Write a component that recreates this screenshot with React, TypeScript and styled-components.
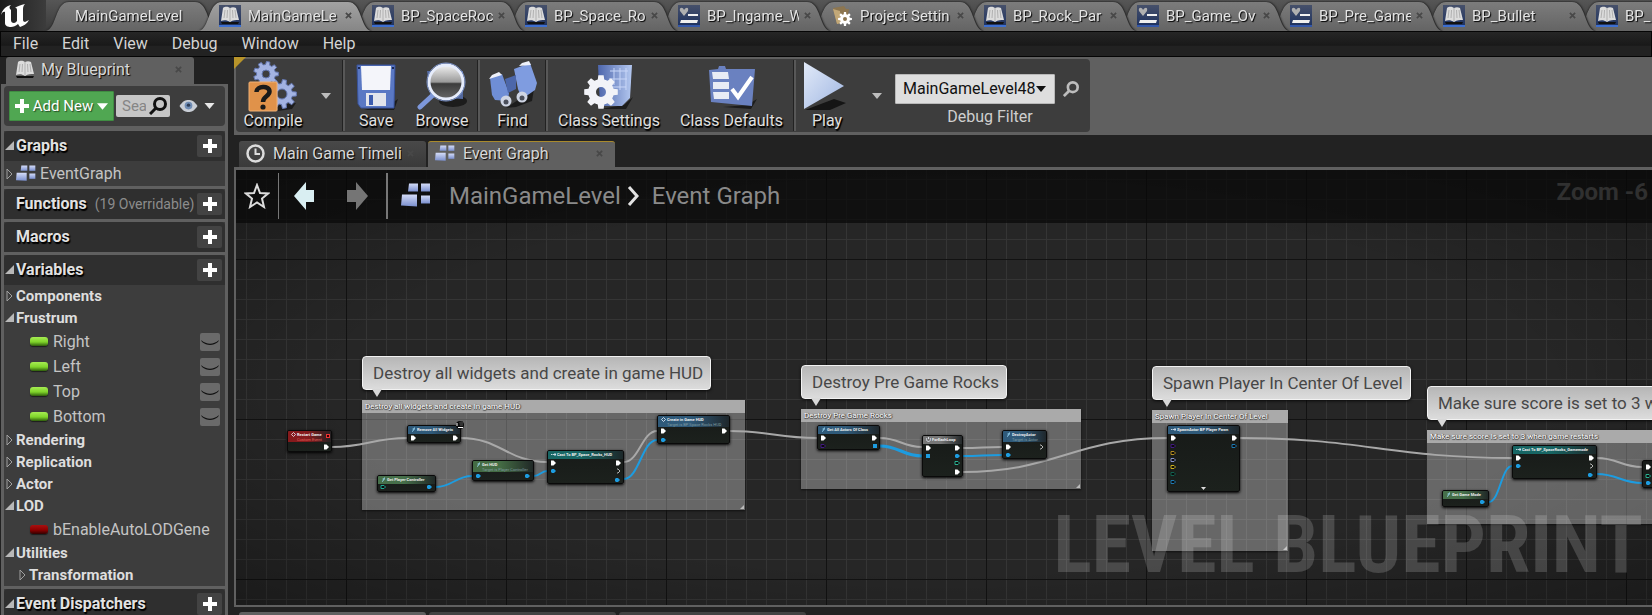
import React from "react";
import styled, { createGlobalStyle, css } from "styled-components";

const Global = createGlobalStyle`
  *, *::before, *::after { box-sizing: border-box; }
  body { margin: 0; background: #222; }
  button, input, select { font: inherit; color: inherit; }
  button { border: 0; padding: 0; background: none; cursor: pointer; }
  ul { list-style: none; margin: 0; padding: 0; }
  svg { display: block; flex: none; }
`;

const Shell = styled.div`
  display: flex;
  flex-direction: column;
  height: 100vh;
  overflow: hidden;
  background: #222;
  color: #d8d8d8;
  font: 16px/20px Roboto, "Liberation Sans", sans-serif;
`;

/* ---------- window tabs ---------- */

const TabBar = styled.header`
  display: flex;
  height: 31px;
  flex: none;
  overflow: hidden;
  padding-top: 2px;
  background: linear-gradient(#565656, #3a3a3a);
`;

const LogoBox = styled.div`
  flex: 0 0 46px;
  margin-top: -2px;
  background: linear-gradient(90deg, #1c1c1c, #303030 60%, #3c3c3c);
`;

const TabWrap = styled.div<{ $z: number }>`
  position: relative;
  z-index: ${(p) => p.$z};
  flex: 0 0 172px;
  margin-right: -19px;
  filter: drop-shadow(0 0 1px #1c1c1c) drop-shadow(1px 0 0 #3a3a3a);
`;

const TabBody = styled.div<{ $active?: boolean; $plain?: boolean }>`
  display: flex;
  align-items: center;
  height: 29px;
  padding: 0 0 2px ${(p) => (p.$plain ? 29 : 20)}px;
  font-size: 15px;
  color: #e4e4e4;
  text-shadow: 1px 1px 1px #000;
  background: ${(p) => (p.$active ? "linear-gradient(#a2a2a2, #868686)" : "linear-gradient(#7c7c7c, #646464)")};
  clip-path: path("M0 29 C11 26 9 0 23 0 H149 C163 0 161 26 172 29 Z");
`;

const TabLabel = styled.button<{ $wide?: boolean }>`
  width: ${(p) => (p.$wide ? 120 : 92)}px;
  margin-left: ${(p) => (p.$wide ? 0 : 7)}px;
  overflow: hidden;
  white-space: nowrap;
  text-align: left;
  text-shadow: inherit;
`;

const CloseButton = styled.button<{ $push?: boolean }>`
  display: flex;
  align-items: center;
  justify-content: center;
  width: 12px;
  height: 12px;
  margin-left: ${(p) => (p.$push ? "auto" : "2px")};
  color: #484848;
`;

/* ---------- menu ---------- */

const MenuBar = styled.nav`
  display: flex;
  align-items: center;
  flex: none;
  height: 26px;
  border: 1px solid #050505;
  background: linear-gradient(#262626, #191919 55%, #222 60%);
`;

const MenuItem = styled.button`
  padding: 0 12px;
  color: #d4d4d4;
`;

const Workspace = styled.div`
  display: flex;
  flex: 1;
  min-height: 0;
`;

/* ---------- left panel ---------- */

const Side = styled.aside`
  display: flex;
  flex-direction: column;
  flex: 0 0 228px;
  padding-left: 1px;
`;

const SideTab = styled.div`
  display: flex;
  align-items: center;
  flex: none;
  width: 188px;
  height: 27px;
  margin-left: 5px;
  padding: 0 10px 2px 8px;
  gap: 5px;
  text-shadow: 1px 1px 1px #000;
  background: #606060;
  border-radius: 3px 3px 0 0;
`;

const SidePanel = styled.div`
  flex: 1;
  min-height: 0;
  overflow: hidden;
  padding: 2px 3px 0;
  background: #606060;
`;

const SideTools = styled.div`
  display: flex;
  align-items: center;
  height: 40px;
  padding: 0 5px;
  margin-bottom: 5px;
  background: #3d3d3d;
  border-radius: 4px;
`;

const AddButton = styled.button`
  display: flex;
  align-items: center;
  justify-content: center;
  gap: 4px;
  width: 105px;
  height: 30px;
  margin-right: 2px;
  background: #50a752;
  border: 1px solid #3f8d42;
  border-radius: 1px;
  font-size: 15px;
  color: #fff;
  text-shadow: 1px 1px 1px #234d24;
`;

const SearchBox = styled.label`
  display: flex;
  align-items: center;
  width: 54px;
  height: 22px;
  margin-right: 8px;
  padding-left: 6px;
  background: #c6c6c6;
  border-radius: 2px;
  color: #111;
`;

const SearchInput = styled.input`
  width: 24px;
  border: 0;
  padding: 0;
  margin-right: 3px;
  font-size: 15px;
  background: transparent;
  outline: 0;
  &::placeholder { color: #858585; opacity: 1; }
`;

const EyeButton = styled.button`
  display: flex;
  align-items: center;
  gap: 5px;
  color: #e8e8e8;
`;

const Section = styled.section`
  margin-bottom: 3px;
  background: #3d3d3d;
`;

const SectionHead = styled.div`
  display: flex;
  align-items: center;
  height: 30px;
  padding-right: 3px;
  background: #2f2f2f;
  border-radius: 4px 4px 0 0;
`;

const Expander = styled.button`
  width: 12px;
  height: 14px;
  flex: none;
`;

const SectionTitle = styled.h2`
  margin: 0;
  font-size: 16px;
  font-weight: 700;
  white-space: nowrap;
  color: #e2e2e2;
  text-shadow: 1px 1px 1px #000, 1px 2px 1px #000;
`;

const Note = styled.span`
  margin-left: 8px;
  font-size: 14px;
  white-space: nowrap;
  color: #8c8c8c;
`;

const PlusButton = styled.button`
  display: flex;
  align-items: center;
  justify-content: center;
  width: 25px;
  height: 22px;
  margin-left: auto;
  background: #434343;
  border-radius: 2px;
  color: #fff;
`;

const Row = styled.li<{ $kind: "graph" | "cat" | "subcat" | "var" }>`
  display: flex;
  align-items: center;
  height: ${(p) => (p.$kind === "var" || p.$kind === "graph" ? 25 : 22)}px;
  padding: 0 5px 0 0;
  white-space: nowrap;
  ${(p) => p.$kind === "var" && css`padding-left: 26px; gap: 5px;`}
  ${(p) => p.$kind === "subcat" && css`padding-left: 13px;`}
  ${(p) => (p.$kind === "cat" || p.$kind === "subcat") && css`font-weight: 700; font-size: 15px;`}
  color: ${(p) => (p.$kind === "cat" || p.$kind === "subcat" ? "#dedede" : "#c4c4c4")};
`;

const GraphRowLabel = styled.span`
  margin-left: 4px;
`;

const Pill = styled.i<{ $red?: boolean }>`
  width: 18px;
  height: 9px;
  border-radius: 3px;
  background: ${(p) => (p.$red ? "linear-gradient(#a81010, #8c0000 55%, #300)" : "linear-gradient(#a6ec52, #7fd42a 55%, #2e5c0c)")};
  box-shadow: 0 1px 1px #1c1c1c;
`;

const EyeToggle = styled.button`
  width: 20px;
  height: 18px;
  margin-left: auto;
  border-radius: 2px;
  background: #6a6a6a;
`;

/* ---------- main area ---------- */

const Main = styled.main`
  display: flex;
  flex-direction: column;
  flex: 1;
  min-width: 0;
  margin-left: 6px;
`;

const ToolStrip = styled.div`
  position: relative;
  flex: none;
  display: flex;
  height: 78px;
  padding: 2px 0 3px 2px;
  background: #606060;
`;

const Corner = styled.svg`
  position: absolute;
  left: 0;
  top: 0;
`;

const Toolbar = styled.div`
  display: flex;
  align-items: stretch;
  padding-right: 5px;
  background: #3d3d3d;
  border-radius: 4px;
`;

const Tool = styled.button<{ $w: number }>`
  display: flex;
  flex-direction: column;
  align-items: center;
  width: ${(p) => p.$w}px;
  padding-top: 2px;
  line-height: 17px;
  white-space: nowrap;
  color: #e0e0e0;
  text-shadow: 1px 1px 1px #000, 1px 2px 1px #000;
`;

const CaretButton = styled.button<{ $w: number }>`
  display: flex;
  align-items: center;
  justify-content: center;
  width: ${(p) => p.$w}px;
  color: #bdbdbd;
`;

const Divider = styled.i`
  width: 3px;
  margin: 1px 0;
  border-left: 1px solid #222;
  background: #585858;
`;

const FilterBox = styled.div`
  display: flex;
  flex-direction: column;
  gap: 4px;
  padding-top: 15px;
  line-height: 18px;
`;

const FilterRow = styled.div`
  display: flex;
  align-items: center;
  gap: 8px;
  color: #bdbdbd;
`;

const SelectWrap = styled.div`
  position: relative;
  display: flex;
  align-items: center;
  color: #111;
`;

const FilterSelect = styled.select`
  appearance: none;
  width: 160px;
  height: 30px;
  padding: 0 7px;
  border: 1px solid #b8b8b8;
  border-radius: 1px;
  background: #dedede;
  color: #111;
`;

const SelectCaret = styled.span`
  position: absolute;
  right: 9px;
  pointer-events: none;
`;

const FilterLabel = styled.label`
  width: 190px;
  text-align: center;
  color: #cfcfcf;
`;

const DocTabs = styled.div`
  display: flex;
  gap: 2px;
  flex: none;
  padding: 6px 0 0 5px;
`;

const DocTab = styled.div<{ $active?: boolean }>`
  display: flex;
  align-items: center;
  width: 187px;
  height: 26px;
  padding: 0 10px 2px 7px;
  color: #d8d8d8;
  text-shadow: 1px 1px 1px #000;
  border-radius: 3px 3px 0 0;
  border-top: 1px solid ${(p) => (p.$active ? "#a98a2c" : "#4a4a4a")};
  background: ${(p) => (p.$active ? "#606060" : "linear-gradient(#484848, #3a3a3a)")};
`;

const DocTabLabel = styled.button`
  width: 130px;
  margin-left: 8px;
  overflow: hidden;
  white-space: nowrap;
  text-align: left;
  text-shadow: inherit;
`;

const Canvas = styled.div`
  position: relative;
  flex: 1;
  min-height: 0;
  overflow: hidden;
  border: solid #606060;
  border-width: 3px 0 2px 2px;
  background-color: #262626;
  background-image:
    radial-gradient(ellipse at center, rgba(0,0,0,0) 60%, rgba(0,0,0,.3)),
    linear-gradient(90deg, #121212 1px, transparent 1px),
    linear-gradient(#121212 1px, transparent 1px),
    linear-gradient(90deg, #353535 1px, transparent 1px),
    linear-gradient(#353535 1px, transparent 1px);
  background-size: auto, 160px 160px, 160px 160px, 20px 20px, 20px 20px;
  background-position: 0 0, 110px 89px, 110px 89px, 10px 9px, 10px 9px;
`;

const Crumbs = styled.div`
  position: absolute;
  z-index: 3;
  left: 0;
  right: 0;
  top: 0;
  display: flex;
  align-items: center;
  height: 53px;
  padding: 0 4px 2px 8px;
  background: rgba(8, 8, 8, .72);
  font-size: 24px;
  line-height: 32px;
  color: #8a8a8a;
`;

const CrumbRule = styled.i<{ $bold?: boolean }>`
  width: ${(p) => (p.$bold ? 2 : 1)}px;
  height: 46px;
  margin-left: ${(p) => (p.$bold ? 3 : 8)}px;
  background: #777;
`;

const CrumbButton = styled.button<{ $m: number }>`
  margin: 0 ${(p) => p.$m}px;
  white-space: nowrap;
`;

const ZoomText = styled.span`
  align-self: flex-start;
  margin: 6px 0 0 auto;
  font-weight: 700;
  color: #303030;
`;

const World = styled.div`
  position: absolute;
  left: -236px;
  top: -170px;
`;

const Wires = styled.svg`
  position: absolute;
  z-index: 1;
  left: 0;
  top: 0;
  overflow: visible;
`;

const Badges = styled(Wires)`
  z-index: 2;
`;

const Comment = styled.div<{ $x: number; $y: number; $w: number; $h: number }>`
  position: absolute;
  left: ${(p) => p.$x}px;
  top: ${(p) => p.$y}px;
  width: ${(p) => p.$w}px;
  height: ${(p) => p.$h}px;
  background: rgba(255, 255, 255, .3);
  box-shadow: 0 1px 2px #111;
`;

const CommentTitle = styled.div`
  height: 13px;
  padding-left: 3px;
  overflow: hidden;
  white-space: nowrap;
  font-size: 8px;
  line-height: 14px;
  color: #fff;
  text-shadow: 1px 0 1px #333, 0 1px 1px #333;
  background: #aaa;
`;

const Grip = styled.svg`
  position: absolute;
  right: 1px;
  bottom: 1px;
`;

const Bubble = styled.div<{ $x: number; $y: number }>`
  position: absolute;
  z-index: 2;
  left: ${(p) => p.$x}px;
  top: ${(p) => p.$y}px;
  height: 34px;
  padding: 0 7px 0 10px;
  border: 1px solid #f2f2f2;
  border-radius: 4px;
  background: linear-gradient(#b6b6b6, #dcdcdc);
  font-size: 17px;
  line-height: 33px;
  white-space: nowrap;
  color: #474747;
  box-shadow: 0 1px 3px #0a0a0a;
  &::after {
    content: "";
    position: absolute;
    left: 9px;
    top: 32px;
    border: solid transparent;
    border-width: 8px 5px 0;
    border-top-color: #d8d8d8;
  }
`;

const NodeBox = styled.div<{ $x: number; $y: number; $w: number; $h: number }>`
  position: absolute;
  z-index: 2;
  left: ${(p) => p.$x}px;
  top: ${(p) => p.$y}px;
  width: ${(p) => p.$w}px;
  height: ${(p) => p.$h}px;
  overflow: hidden;
  border: 1px solid #0a0a0a;
  border-radius: 2px;
  background: linear-gradient(#171a18, #1c211d);
  box-shadow: 0 1px 3px #000;
`;

const NodeHead = styled.div<{ $color: string; $tall?: boolean }>`
  display: flex;
  gap: 1px;
  height: ${(p) => (p.$tall ? 11 : 8)}px;
  padding: 1px 0 0 3px;
  background: linear-gradient(90deg, ${(p) => p.$color}, ${(p) => p.$color} 45%, #1d2224 105%);
  font-size: 4px;
  line-height: 6px;
  font-weight: 700;
  white-space: nowrap;
  color: #eee;
`;

const NodeSub = styled.div<{ $color: string }>`
  font-weight: 400;
  line-height: 4px;
  color: ${(p) => p.$color};
`;

const Watermark = styled.div`
  position: absolute;
  z-index: 2;
  right: 9px;
  bottom: 12px;
  font: 700 80px/96px "Roboto Condensed", Roboto, sans-serif;
  white-space: nowrap;
  color: rgba(255, 255, 255, .17);
`;

const BottomTabs = styled.div`
  display: flex;
  gap: 3px;
  flex: none;
  height: 8px;
  padding: 5px 0 0 5px;
`;

const BottomTab = styled.i<{ $active?: boolean }>`
  width: 187px;
  border-radius: 3px 3px 0 0;
  background: ${(p) => (p.$active ? "#606060" : "#434343")};
`;

/* ---------- icons ---------- */

const gear = (cx: number, cy: number, r: number, teeth: number, depth: number) => {
  const pts: string[] = [];
  const step = (Math.PI * 2) / teeth;
  for (let i = 0; i < teeth; i++) {
    const a = i * step;
    [[-0.32, r - depth], [-0.2, r], [0.2, r], [0.32, r - depth]].forEach(([o, q]) => {
      pts.push(`${(cx + Math.cos(a + o * step) * q).toFixed(2)} ${(cy + Math.sin(a + o * step) * q).toFixed(2)}`);
    });
  }
  return `M${pts.join("L")}Z`;
};
const hole = (cx: number, cy: number, r: number) => `M${cx - r} ${cy}a${r} ${r} 0 1 0 ${2 * r} 0a${r} ${r} 0 1 0 ${-2 * r} 0Z`;

const Logo = () => (
  <svg width="46" height="31" viewBox="0 0 46 31">
    <path
      d="M1 15C2 10 6 6 11 5C9 7 9 8 11 10V20C11 22 12 23 14 23C15 23 16 22 17 21V10C17 8 16 8 15 8C17 6 21 5 25 4C23 6 23 8 23 10V20C23 21 24 22 25 22L29 20C27 24 23 26 20 27L18 24C16 26 13 27 11 27C8 27 5 26 5 23V12C4 11 2 12 1 15Z"
      fill="#fff"
    />
  </svg>
);

const Cross = () => (
  <svg width="7" height="7" viewBox="0 0 8 8">
    <path d="M1 1L7 7M7 1L1 7" stroke="currentColor" strokeWidth="2" />
  </svg>
);

const Book = ({ framed }: { framed?: boolean }) => (
  <svg width="22" height="22" viewBox="0 0 22 22">
    <defs>
      <linearGradient id="bookBg" x1="0" y1="0" x2="0" y2="1">
        <stop offset="0" stopColor="#46506a" />
        <stop offset="1" stopColor="#1d3160" />
      </linearGradient>
    </defs>
    {framed && <rect width="22" height="22" fill="url(#bookBg)" />}
    {framed && <rect y="20" width="22" height="2" fill="#3d6fd0" />}
    <path d="M2 17L20 17L19 19H3Z" fill="#111" />
    <path d="M4 3C7 1 9 2 11 3C13 2 15 2 17 3L20 15C17 15 14 15 11 17C8 15 5 15 2 16Z" fill="#dcdcdc" />
    <path d="M11 3V16M6 5L5 13M8.500 5L8 13M13.500 5L14 13M16 5L17 13" stroke="#b0b0b0" />
  </svg>
);

const Widget = () => (
  <svg width="22" height="22" viewBox="0 0 22 22">
    <rect width="22" height="22" fill="url(#bookBg)" />
    <rect y="20" width="22" height="2" fill="#3457a8" />
    <path d="M6 11L2 6C1 2 5 2 6 5C8 2 11 2 10 6Z" fill="#b0b0b0" />
    <path d="M10 9H20V11H10ZM3 15H20L19 18H2Z" fill="#f0f0f0" />
  </svg>
);

const SettingsFolder = () => (
  <svg width="22" height="22" viewBox="0 0 22 22">
    <path d="M2 3L13 1L15 4H18L16 16L6 19Z" fill="#8d7650" />
    <path d="M2 4L9 6L10 18L6 19Z" fill="#c2a878" />
    <path d={gear(14, 14, 7, 8, 2) + hole(14, 14, 2)} fill="#fff" fillRule="evenodd" />
  </svg>
);

const Plus = ({ size = 14 }: { size?: number }) => (
  <svg width={size} height={size} viewBox="0 0 14 14">
    <path d="M7 0V14M0 7H14" stroke="currentColor" strokeWidth="4" />
  </svg>
);

const Caret = ({ w = 10, h = 6 }: { w?: number; h?: number }) => (
  <svg width={w} height={h} viewBox="0 0 10 6">
    <path d="M0 0H10L5 6Z" fill="currentColor" />
  </svg>
);

const Magnifier = ({ size, weight = 3 }: { size: number; weight?: number }) => (
  <svg width={size} height={size} viewBox="0 0 18 18" fill="none" stroke="currentColor" strokeWidth={weight}>
    <circle cx="11" cy="7" r="5.500" />
    <path d="M7 11L1 17" />
  </svg>
);

const Eye = () => (
  <svg width="21" height="12" viewBox="0 0 21 14">
    <path d="M0 7C4 1 7 0 10.500 0S17 1 21 7C17 13 14 14 10.500 14S4 13 0 7Z" fill="#c9ced6" />
    <circle cx="10.500" cy="6.500" r="4.500" fill="#6f8cb4" />
    <circle cx="10.500" cy="6" r="2" fill="#2c3c56" />
  </svg>
);

const Triangle = ({ open }: { open?: boolean }) => (
  <svg width="12" height="14" viewBox="0 0 12 14">
    {open ? <path d="M10 2V11H1Z" fill="#b8b8b8" /> : <path d="M3 2L8 7L3 12Z" fill="none" stroke="#a0a0a0" />}
  </svg>
);

const GraphIcon = ({ w = 20, h = 17 }: { w?: number; h?: number }) => (
  <svg width={w} height={h} viewBox="0 0 30 24">
    <defs>
      <linearGradient id="graphTile" x1="0" y1="0" x2="0" y2="1">
        <stop offset="0" stopColor="#d4dcf8" />
        <stop offset="1" stopColor="#7a8fce" />
      </linearGradient>
    </defs>
    <g fill="url(#graphTile)">
      <path d="M8 0H17V8H7Z" />
      <path d="M20 0H29V8H20Z" />
      <path d="M1 11H16V23L0 22Z" />
      <path d="M20 12H29V20H20Z" />
    </g>
  </svg>
);

const Clock = () => (
  <svg width="19" height="19" viewBox="0 0 19 19" fill="none" stroke="#dcdcdc">
    <circle cx="9.500" cy="9.500" r="8" strokeWidth="2.500" />
    <path d="M9.500 4.500V10H14" strokeWidth="2" />
  </svg>
);

const CompileIcon = () => (
  <svg width="50" height="51" viewBox="0 0 50 51">
    <path d="M30 44L48 42L44 48L30 50Z" fill="#1c1c1c" />
    <g fill="#a3b3e2" stroke="#6477b0" fillRule="evenodd">
      <path d={gear(18, 13, 12.5, 9, 3) + hole(18, 13, 4)} />
      <path d={gear(34, 33, 14.5, 9, 4) + hole(34, 33, 5)} />
    </g>
    <rect x="1" y="21" width="28" height="29" rx="1" fill="#e0924a" stroke="#f0b074" />
    <path d="M8.500 31C8.500 25 21.500 24 21.500 30.500C21.500 35.500 15 35 15 41" fill="none" stroke="#1a1a1a" strokeWidth="4.500" />
    <circle cx="15" cy="46" r="2.600" fill="#1a1a1a" />
  </svg>
);

const SaveIcon = () => (
  <svg width="44" height="51" viewBox="-2 0 44 51">
    <path d="M36 42L42 38L38 49L8 49Z" fill="#1c1c1c" />
    <path d="M1 4H39L38 47H5L2 43Z" fill="#5a78c4" stroke="#38529a" />
    <path d="M5 5H35L34 29H6Z" fill="#f4f5fa" />
    <path d="M10 32H30V45H10Z" fill="#e3e5ec" />
    <path d="M13 34H17V44H13Z" fill="#3d5cae" />
    <path d="M2 6H4V8H2ZM36 6H38V8H36Z" fill="#1c2a55" />
  </svg>
);

const BrowseIcon = () => (
  <svg width="50" height="51" viewBox="0 0 50 51">
    <defs>
      <linearGradient id="lens" x1="0" y1="0" x2="0" y2="1">
        <stop offset="0" stopColor="#f2f2f2" />
        <stop offset=".5" stopColor="#9a9a9a" />
        <stop offset=".55" stopColor="#3c3c3c" />
        <stop offset="1" stopColor="#666" />
      </linearGradient>
    </defs>
    <ellipse cx="36" cy="40" rx="14" ry="6" fill="#1c1c1c" />
    <path d="M10 10H46V38L14 36Z" fill="#53699f" />
    <path d="M16 34L3 46" stroke="#7d97da" strokeWidth="5" strokeLinecap="round" />
    <circle cx="29" cy="21" r="17" fill="url(#lens)" stroke="#e6ecfb" strokeWidth="3" />
    <circle cx="29" cy="21" r="19" fill="none" stroke="#7f97cf" />
  </svg>
);

const FindIcon = () => (
  <svg width="50" height="51" viewBox="0 0 50 51">
    <path d="M18 47L46 28L44 40L28 46Z" fill="#1c1c1c" />
    <path d="M2 17L14 13L21 32L20 40L7 39L4 34Z" fill="#6f8ed6" />
    <path d="M26 8L42 2L49 22L47 29L34 38L30 28Z" fill="#7f9ce0" />
    <path d="M17 18L28 14V28L20 32Z" fill="#4c67aa" />
    <path d="M1 18L4 14L11 11L14 14Z" fill="#eef1fa" />
    <path d="M31 5L34 2L41 0L43 4Z" fill="#eef1fa" />
    <circle cx="18" cy="40" r="5.500" fill="#cfd5e4" />
    <circle cx="34" cy="36" r="5.500" fill="#cfd5e4" />
    <circle cx="18" cy="41" r="2.500" fill="#4b4f5b" />
    <circle cx="34" cy="37" r="2.500" fill="#4b4f5b" />
  </svg>
);

const ClassSettingsIcon = () => (
  <svg width="50" height="51" viewBox="0 0 50 51">
    <defs>
      <linearGradient id="sheet" x1="0" y1="0" x2="1" y2="0">
        <stop offset="0" stopColor="#4d66ac" />
        <stop offset="1" stopColor="#b4c8f0" />
      </linearGradient>
    </defs>
    <path d="M40 44L49 36L42 48L16 48Z" fill="#1c1c1c" />
    <path d="M14 4H48L46 37L38 45H16Z" fill="url(#sheet)" />
    <path d="M26 10H44M25 18H43M28 26H42M30 7V24M36 7V29M42 7V29" stroke="#c8d6f8" fill="none" />
    <path d={gear(17, 31, 17, 8, 4) + hole(17, 31, 5)} fill="#f2f3f8" fillRule="evenodd" />
  </svg>
);

const ClassDefaultsIcon = () => (
  <svg width="50" height="51" viewBox="0 0 50 51">
    <path d="M40 44L50 38L44 48L16 46Z" fill="#1c1c1c" />
    <path d="M12 5H18L19 8H48L45 45L4 41L2 9L11 8Z" fill="#6a81c0" />
    <path d="M5 11H21L22 18H6ZM6 21H22V28H6ZM6 31H22V38H7Z" fill="#e9ecf5" />
    <path d="M25 28L31 36L45 16" fill="none" stroke="#fff" strokeWidth="4" />
  </svg>
);

const PlayIcon = () => (
  <svg width="50" height="51" viewBox="0 0 50 51">
    <defs>
      <linearGradient id="playFill" x1="0" y1="0" x2="1" y2="1">
        <stop offset="0" stopColor="#e2eaf8" />
        <stop offset="1" stopColor="#9fb6e2" />
      </linearGradient>
    </defs>
    <path d="M3 49L32 38L44 42L28 49Z" fill="#151515" />
    <path d="M2 1L42 25L2 48Z" fill="url(#playFill)" />
  </svg>
);

const Star = () => (
  <svg width="26" height="26" viewBox="0 0 26 26">
    <path d="M13 2L16 10L24 10.500L18 15.500L20 24L13 19.500L6 24L8 15.500L2 10.500L10 10Z" fill="none" stroke="#ddd" strokeWidth="2" />
  </svg>
);

const Arrow = ({ back }: { back?: boolean }) => (
  <svg width="24" height="30" viewBox="0 0 24 30">
    {back ? (
      <path d="M1 15L13 1V9H21V21H13V29Z" fill="#d9eef2" />
    ) : (
      <path d="M23 15L11 1V9H2V21H11V29Z" fill="#757575" />
    )}
  </svg>
);

const Chevron = () => (
  <svg width="14" height="22" viewBox="-2 0 14 22">
    <path d="M1 2L9 11L1 20" fill="none" stroke="#e2e2e2" strokeWidth="3" />
  </svg>
);

/* ---------- data ---------- */

const tabs: { icon?: "book" | "widget" | "settings"; label: string; active?: boolean }[] = [
  { label: "MainGameLevel" },
  { icon: "book", label: "MainGameLe", active: true },
  { icon: "book", label: "BP_SpaceRoc" },
  { icon: "book", label: "BP_Space_Ro" },
  { icon: "widget", label: "BP_Ingame_W" },
  { icon: "settings", label: "Project Settin" },
  { icon: "book", label: "BP_Rock_Par" },
  { icon: "widget", label: "BP_Game_Ov" },
  { icon: "widget", label: "BP_Pre_Game" },
  { icon: "book", label: "BP_Bullet" },
  { icon: "book", label: "BP_" },
];

const BLUE = "#1d9ce0";
type PinKind = "exec" | "execOut" | "dot" | "ring" | "square";
type Pin = [PinKind, number, number, string?];
type GraphNode = { x: number; y: number; w: number; h: number; color?: string; title?: string; sub?: string; glyph?: "f" | "diamond" | "cast" | "loop"; pins: Pin[] };

const nodes: GraphNode[] = [
  { x: 287, y: 430, w: 45, h: 22, color: "#861a1c", title: "Restart Game", sub: "Custom Event", glyph: "diamond", pins: [["exec", 326, 447], ["square", 328, 436, "#e33"]] },
  { x: 407, y: 425, w: 54, h: 18, color: "#2f5a7a", title: "Remove All Widgets", glyph: "f", pins: [["exec", 413, 438], ["exec", 455, 438]] },
  { x: 377, y: 475, w: 59, h: 17, color: "#46704a", title: "Get Player Controller", glyph: "f", pins: [["ring", 383, 487, "#1fa890"], ["dot", 429, 487]] },
  { x: 472, y: 460, w: 62, h: 21, color: "#446c44", title: "Get HUD", sub: "Target is Player Controller", glyph: "f", pins: [["dot", 478, 476], ["dot", 527, 476]] },
  { x: 547, y: 450, w: 77, h: 34, color: "#176664", title: "Cast To BP_Space_Rocks_HUD", glyph: "cast", pins: [["exec", 553, 463], ["dot", 553, 471], ["exec", 618, 463], ["execOut", 618, 471], ["dot", 617, 480]] },
  { x: 657, y: 415, w: 73, h: 29, color: "#2f5a7a", title: "Create in Game HUD", sub: "Target is BP Space Rocks HUD", glyph: "diamond", pins: [["exec", 663, 431], ["dot", 663, 440], ["exec", 724, 431]] },
  { x: 817, y: 425, w: 63, h: 25, color: "#2f5a7a", title: "Get All Actors Of Class", glyph: "f", pins: [["exec", 823, 438], ["ring", 823, 446, "#421a80"], ["exec", 874, 438], ["square", 875, 446, BLUE]] },
  { x: 922, y: 435, w: 41, h: 42, color: "#777", title: "ForEachLoop", glyph: "loop", pins: [["exec", 928, 448], ["square", 928, 456, BLUE], ["exec", 957, 448], ["dot", 957, 456], ["ring", 957, 463, "#28b090"], ["exec", 957, 472]] },
  { x: 1002, y: 430, w: 45, h: 29, color: "#2f5a7a", title: "DestroyActor", sub: "Target is Actor", glyph: "f", pins: [["exec", 1008, 447], ["dot", 1008, 455], ["execOut", 1041, 447]] },
  { x: 1167, y: 425, w: 73, h: 67, color: "#2f5a7a", title: "SpawnActor BP Player Pawn", glyph: "cast", pins: [["exec", 1173, 438], ["ring", 1173, 446, "#421a80"], ["ring", 1173, 453, "#b08a20"], ["ring", 1173, 460, "#8490cc"], ["ring", 1173, 467, "#c8ac20"], ["ring", 1173, 474, "#12604f"], ["ring", 1173, 482, "#1d78b0"], ["exec", 1234, 438], ["ring", 1234, 446, "#1d78b0"]] },
  { x: 1512, y: 445, w: 85, h: 34, color: "#176664", title: "Cast To BP_SpaceRocks_Gamemode", glyph: "cast", pins: [["exec", 1518, 458], ["dot", 1518, 466], ["exec", 1591, 458], ["execOut", 1591, 466], ["dot", 1590, 475]] },
  { x: 1442, y: 490, w: 47, h: 17, color: "#46704a", title: "Get Game Mode", glyph: "f", pins: [["dot", 1482, 502]] },
  { x: 1642, y: 460, w: 50, h: 28, pins: [["exec", 1648, 467], ["ring", 1648, 476, "#28b090"], ["dot", 1648, 483]] },
];

const wires: [number, number, number, number, ("blue" | "thick")?][] = [
  [332, 447, 407, 438],
  [461, 438, 547, 462],
  [436, 487, 472, 476, "blue"],
  [534, 476, 547, 471, "blue"],
  [624, 462, 657, 431],
  [624, 479, 657, 440, "blue"],
  [730, 431, 817, 438],
  [880, 438, 922, 447],
  [880, 446, 922, 456, "thick"],
  [963, 448, 1002, 447],
  [963, 456, 1002, 455, "blue"],
  [963, 472, 1167, 438],
  [1240, 438, 1512, 458],
  [1597, 458, 1642, 467],
  [1597, 474, 1642, 483, "blue"],
  [1489, 502, 1512, 466, "blue"],
];

const comments = [
  { x: 362, y: 400, w: 383, h: 110, bx: 362, by: 356, text: "Destroy all widgets and create in game HUD" },
  { x: 801, y: 409, w: 280, h: 80, bx: 801, by: 365, text: "Destroy Pre Game Rocks" },
  { x: 1152, y: 410, w: 136, h: 141, bx: 1152, by: 366, text: "Spawn Player In Center Of Level" },
  { x: 1427, y: 430, w: 400, h: 94, bx: 1427, by: 386, text: "Make sure score is set to 3 when game restarts" },
];

const PinMark = ({ pin: [kind, x, y, color = BLUE] }: { pin: Pin }) => {
  if (kind === "exec") return <path d={`M${x - 2} ${y - 2.5}h2.500l2.500 2.500l-2.500 2.500h-2.500Z`} fill="#fff" />;
  if (kind === "execOut") return <path d={`M${x - 1} ${y - 2}h1l2 2l-2 2h-1`} fill="none" stroke="#ddd" strokeWidth=".8" />;
  if (kind === "ring") return <path d={`M${x - 2} ${y - 1.5}h3l1.500 1.500l-1.500 1.500h-3Z`} fill="#0a0a0a" stroke={color} />;
  if (kind === "square") return <rect x={x - 1.5} y={y - 1.5} width="3" height="3" fill={color === BLUE ? color : "#300"} stroke={color} />;
  return <path d={`M${x - 2} ${y - 1}l1-1h2l2 2l-2 2h-2l-1-1Z`} fill={color} />;
};

const HeadGlyph = ({ kind }: { kind?: GraphNode["glyph"] }) => (
  <svg width="5" height="5" viewBox="0 0 5 5" fill="none" stroke="#eef4ff" strokeWidth=".8">
    {kind === "f" && <path d="M4 .5C2.500 .5 3 4.500 1 4.500M1.500 2H4" stroke="#9fe0ff" />}
    {kind === "diamond" && <path d="M2.500 .5L4.500 2.500L2.500 4.500L.5 2.500Z" />}
    {kind === "cast" && <path d="M0 2.500H1.500M2 2.500H5M3.500 1L5 2.500L3.500 4" />}
    {kind === "loop" && <path d="M1 1C0 2 0 4 2.500 4.500C5 4 5 2 4 1M2.500 0V2" />}
  </svg>
);

const TabIcon = ({ kind }: { kind: "book" | "widget" | "settings" }) =>
  kind === "book" ? <Book framed /> : kind === "widget" ? <Widget /> : <SettingsFolder />;

const Category = ({ label, open, sub }: { label: string; open?: boolean; sub?: boolean }) => (
  <Row $kind={sub ? "subcat" : "cat"}>
    <Expander aria-label={`Toggle ${label}`}><Triangle open={open} /></Expander>
    {label}
  </Row>
);

const Variable = ({ label, red }: { label: string; red?: boolean }) => (
  <Row $kind="var">
    <Pill $red={red} />
    {label}
    {!red && (
      <EyeToggle aria-label={`Show ${label}`}>
        <svg width="20" height="18" viewBox="0 0 20 18">
          <path d="M1 7C7 12 13 12 19 7L18 9C13 13 7 13 2 9Z" fill="#111" />
        </svg>
      </EyeToggle>
    )}
  </Row>
);

const Head = ({ label, note, open }: { label: string; note?: string; open?: boolean }) => (
  <SectionHead>
    <Expander aria-label={`Toggle ${label}`}>{open && <Triangle open />}</Expander>
    <SectionTitle>{label}</SectionTitle>
    {note && <Note>{note}</Note>}
    <PlusButton aria-label={`Add to ${label}`}><Plus /></PlusButton>
  </SectionHead>
);

const wirePath = (x1: number, y1: number, x2: number, y2: number) => {
  const d = (x2 - x1) * 0.45;
  return `M${x1} ${y1}C${x1 + d} ${y1} ${x2 - d} ${y2} ${x2} ${y2}`;
};

export default function App() {
  return (
    <Shell>
      <Global />
      <TabBar>
        <LogoBox><Logo /></LogoBox>
        {tabs.map((t, i) => (
          <TabWrap key={i} $z={t.active ? 20 : 12 - i}>
            <TabBody $active={t.active} $plain={!t.icon}>
              {t.icon && <TabIcon kind={t.icon} />}
              <TabLabel $wide={!t.icon}>{t.label}</TabLabel>
              {t.icon && <CloseButton aria-label={`Close ${t.label}`}><Cross /></CloseButton>}
            </TabBody>
          </TabWrap>
        ))}
      </TabBar>

      <MenuBar>
        {["File", "Edit", "View", "Debug", "Window", "Help"].map((m) => <MenuItem key={m}>{m}</MenuItem>)}
      </MenuBar>

      <Workspace>
        <Side>
          <SideTab>
            <Book />
            My Blueprint
            <CloseButton $push aria-label="Close My Blueprint"><Cross /></CloseButton>
          </SideTab>
          <SidePanel>
            <SideTools>
              <AddButton><Plus />Add New<Caret w={11} h={7} /></AddButton>
              <SearchBox>
                <SearchInput placeholder="Search" aria-label="Search" />
                <Magnifier size={18} />
              </SearchBox>
              <EyeButton aria-label="View options"><Eye /><Caret w={11} h={6} /></EyeButton>
            </SideTools>
            <Section>
              <Head label="Graphs" open />
              <ul>
                <Row $kind="graph">
                  <Expander aria-label="Toggle EventGraph"><Triangle /></Expander>
                  <GraphIcon />
                  <GraphRowLabel>EventGraph</GraphRowLabel>
                </Row>
              </ul>
            </Section>
            <Section><Head label="Functions" note="(19 Overridable)" /></Section>
            <Section><Head label="Macros" /></Section>
            <Section>
              <Head label="Variables" open />
              <ul>
                <Category label="Components" />
                <Category label="Frustrum" open />
                <Variable label="Right" />
                <Variable label="Left" />
                <Variable label="Top" />
                <Variable label="Bottom" />
                <Category label="Rendering" />
                <Category label="Replication" />
                <Category label="Actor" />
                <Category label="LOD" open />
                <Variable label="bEnableAutoLODGene" red />
                <Category label="Utilities" open />
                <Category label="Transformation" sub />
              </ul>
            </Section>
            <Section><Head label="Event Dispatchers" open /></Section>
          </SidePanel>
        </Side>

        <Main>
          <ToolStrip>
            <Toolbar>
              <Tool $w={74}><CompileIcon />Compile</Tool>
              <CaretButton $w={32} aria-label="Compile options"><Caret /></CaretButton>
              <Divider />
              <Tool $w={62}><SaveIcon />Save</Tool>
              <Tool $w={70}><BrowseIcon />Browse</Tool>
              <Divider />
              <Tool $w={65}><FindIcon />Find</Tool>
              <Divider />
              <Tool $w={122}><ClassSettingsIcon />Class Settings</Tool>
              <Tool $w={123}><ClassDefaultsIcon />Class Defaults</Tool>
              <Divider />
              <Tool $w={62}><PlayIcon />Play</Tool>
              <CaretButton $w={37} aria-label="Play options"><Caret /></CaretButton>
              <FilterBox>
                <FilterRow>
                  <SelectWrap>
                    <FilterSelect id="debug-filter"><option>MainGameLevel48</option></FilterSelect>
                    <SelectCaret><Caret /></SelectCaret>
                  </SelectWrap>
                  <Magnifier size={16} weight={3} />
                </FilterRow>
                <FilterLabel htmlFor="debug-filter">Debug Filter</FilterLabel>
              </FilterBox>
            </Toolbar>
            <Corner width="12" height="12" viewBox="0 0 12 12"><path d="M0 0H12L0 12Z" fill="#b8942a" /></Corner>
          </ToolStrip>

          <DocTabs>
            <DocTab>
              <Clock />
              <DocTabLabel>Main Game Timeli</DocTabLabel>
              <CloseButton aria-label="Close Main Game Timeline"><Cross /></CloseButton>
            </DocTab>
            <DocTab $active>
              <GraphIcon />
              <DocTabLabel>Event Graph</DocTabLabel>
              <CloseButton $push aria-label="Close Event Graph"><Cross /></CloseButton>
            </DocTab>
          </DocTabs>

          <Canvas>
            <World>
              {comments.map((c) => (
                <React.Fragment key={c.text}>
                  <Comment $x={c.x} $y={c.y} $w={c.w} $h={c.h}>
                    <CommentTitle>{c.text}</CommentTitle>
                    <Grip width="4" height="4" viewBox="0 0 4 4"><path d="M4 0V4H0Z" fill="#bbb" /></Grip>
                  </Comment>
                  <Bubble $x={c.bx} $y={c.by}>{c.text}</Bubble>
                </React.Fragment>
              ))}
              <Wires width="1" height="1">
                {wires.map(([a, b, c, d, kind], i) => (
                  <path key={i} d={wirePath(a, b, c, d)} fill="none" stroke={kind ? BLUE : "#a8a8a8"} strokeWidth={kind === "thick" ? 3 : 2} />
                ))}
              </Wires>
              {nodes.map((n, i) => (
                <NodeBox key={i} $x={n.x} $y={n.y} $w={n.w} $h={n.h}>
                  {n.title && (
                    <NodeHead $color={n.color!} $tall={!!n.sub}>
                      <HeadGlyph kind={n.glyph} />
                      <div>
                        {n.title}
                        {n.sub && <NodeSub $color={n.glyph === "diamond" && n.w < 50 ? "#e0605c" : "#7f9aa0"}>{n.sub}</NodeSub>}
                      </div>
                    </NodeHead>
                  )}
                  <Wires width="1" height="1" viewBox={`${n.x + 1} ${n.y + 1} 1 1`}>
                    {n.pins.map((p, k) => <PinMark key={k} pin={p} />)}
                  </Wires>
                </NodeBox>
              ))}
              <Badges width="1" height="1">
                <circle cx="460" cy="425" r="4" fill="#0a0a0a" />
                <path d="M459 422L463 421V426H460Z" fill="#333" />
                <path d="M458 427.500H463M457 423V426" stroke="#fff" />
                <path d="M1201 487H1206L1203.500 490Z" fill="#ddd" />
              </Badges>
            </World>
            <Crumbs>
              <CrumbButton $m={0} aria-label="Add bookmark"><Star /></CrumbButton>
              <CrumbRule />
              <CrumbButton $m={14} aria-label="Back"><Arrow back /></CrumbButton>
              <CrumbButton $m={14} aria-label="Forward"><Arrow /></CrumbButton>
              <CrumbRule $bold />
              <CrumbButton $m={13} aria-label="Graph"><GraphIcon w={30} h={25} /></CrumbButton>
              <CrumbButton $m={5}>MainGameLevel</CrumbButton>
              <Chevron />
              <CrumbButton $m={12}>Event Graph</CrumbButton>
              <ZoomText>Zoom -6</ZoomText>
            </Crumbs>
            <Watermark>LEVEL BLUEPRINT</Watermark>
          </Canvas>
          <BottomTabs><BottomTab $active /><BottomTab /><BottomTab /></BottomTabs>
        </Main>
      </Workspace>
    </Shell>
  );
}
